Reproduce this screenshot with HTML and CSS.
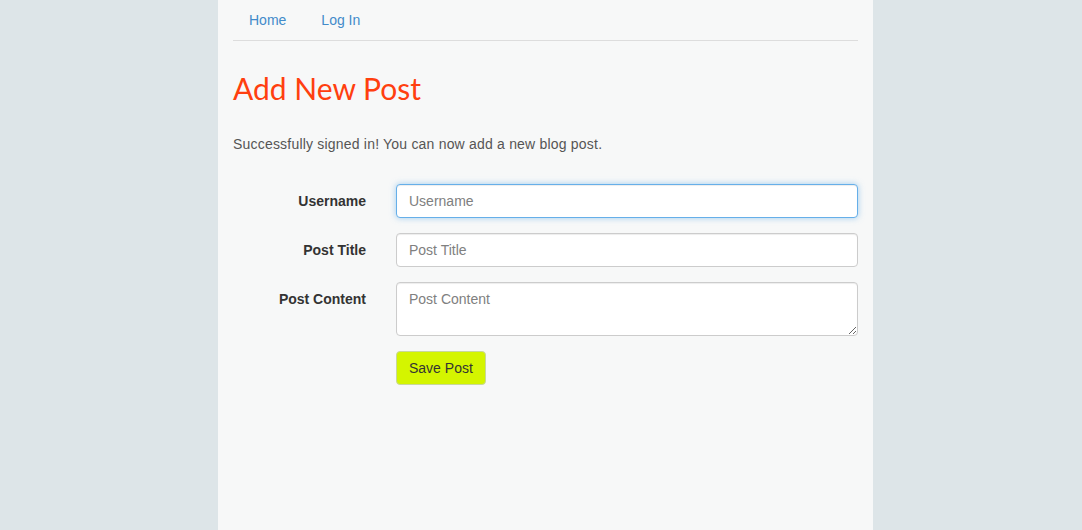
FILE: index.html
```html
<!DOCTYPE html>
<html>
<head>
<meta charset="utf-8">
<link rel="stylesheet" href="styles.css">
</head>
<body>
<div class="page">
  <nav class="nav">
    <a href="#" class="nav-link">Home</a>
    <a href="#" class="nav-link">Log In</a>
  </nav>
  <h1 class="title">Add New Post</h1>
  <p class="lead-text">Successfully signed in! You can now add a new blog post.</p>
  <form class="form">
    <div class="form-row">
      <label class="form-label">Username</label>
      <div class="form-field"><input class="control control-focus" type="text" placeholder="Username"></div>
    </div>
    <div class="form-row">
      <label class="form-label">Post Title</label>
      <div class="form-field"><input class="control" type="text" placeholder="Post Title"></div>
    </div>
    <div class="form-row">
      <label class="form-label">Post Content</label>
      <div class="form-field"><textarea class="control control-area" rows="2" placeholder="Post Content"></textarea></div>
    </div>
    <div class="form-row">
      <div class="form-label"></div>
      <div class="form-field"><button type="button" class="btn">Save Post</button></div>
    </div>
  </form>
</div>
</body>
</html>
```

FILE: styles.css
```css
* { box-sizing: border-box; }
html, body { height: 100%; }
body {
  margin: 0;
  background: #dde5e8;
  font-family: "Liberation Sans", Arial, sans-serif;
  font-size: 14px;
  line-height: 20px;
  color: #333;
}
.page {
  width: 655px;
  min-height: 100%;
  margin-left: 218px;
  background: #f7f8f8;
  padding: 0 15px;
  overflow: hidden;
}
.nav {
  display: flex;
  gap: 3px;
  border-bottom: 1px solid #dddddd;
}
.nav-link {
  display: block;
  padding: 10px 16px;
  color: #428bca;
  text-decoration: none;
}
.title {
  margin: 20px 0 0;
  font-family: Lato, "Liberation Sans", sans-serif;
  font-weight: 400;
  font-size: 30px;
  line-height: 54px;
  color: #ff3f0f;
}
.lead-text {
  margin: 19px 0 0;
  color: #555;
  letter-spacing: 0.2px;
}
.form {
  margin: 30px -15px 0;
}
.form-row {
  display: flex;
  margin-bottom: 15px;
}
.form-label {
  width: 163px;
  flex: none;
  padding: 7px 15px 0;
  text-align: right;
  font-weight: bold;
  color: #333;
}
.form-field {
  flex: 1;
  padding: 0 15px;
}
.control {
  display: block;
  width: 100%;
  height: 34px;
  padding: 6px 12px;
  font-family: "Liberation Sans", Arial, sans-serif;
  font-size: 14px;
  line-height: 20px;
  color: #555;
  background: #fff;
  border: 1px solid #cccccc;
  border-radius: 4px;
  box-shadow: inset 0 1px 1px rgba(0,0,0,0.075);
  outline: none;
}
.control::placeholder { color: #808080; }
.control-focus {
  border-color: #66afe9;
  box-shadow: inset 0 1px 1px rgba(0,0,0,0.075), 0 0 6px rgba(102,175,233,0.6);
}
.control-area {
  height: 54px;
  resize: vertical;
}
.btn {
  display: block;
  height: 34px;
  padding: 6px 12px;
  font-family: "Liberation Sans", Arial, sans-serif;
  font-size: 14px;
  line-height: 20px;
  color: #333;
  background: #d4f500;
  border: 1px solid #c8d89a;
  border-radius: 4px;
}
```
